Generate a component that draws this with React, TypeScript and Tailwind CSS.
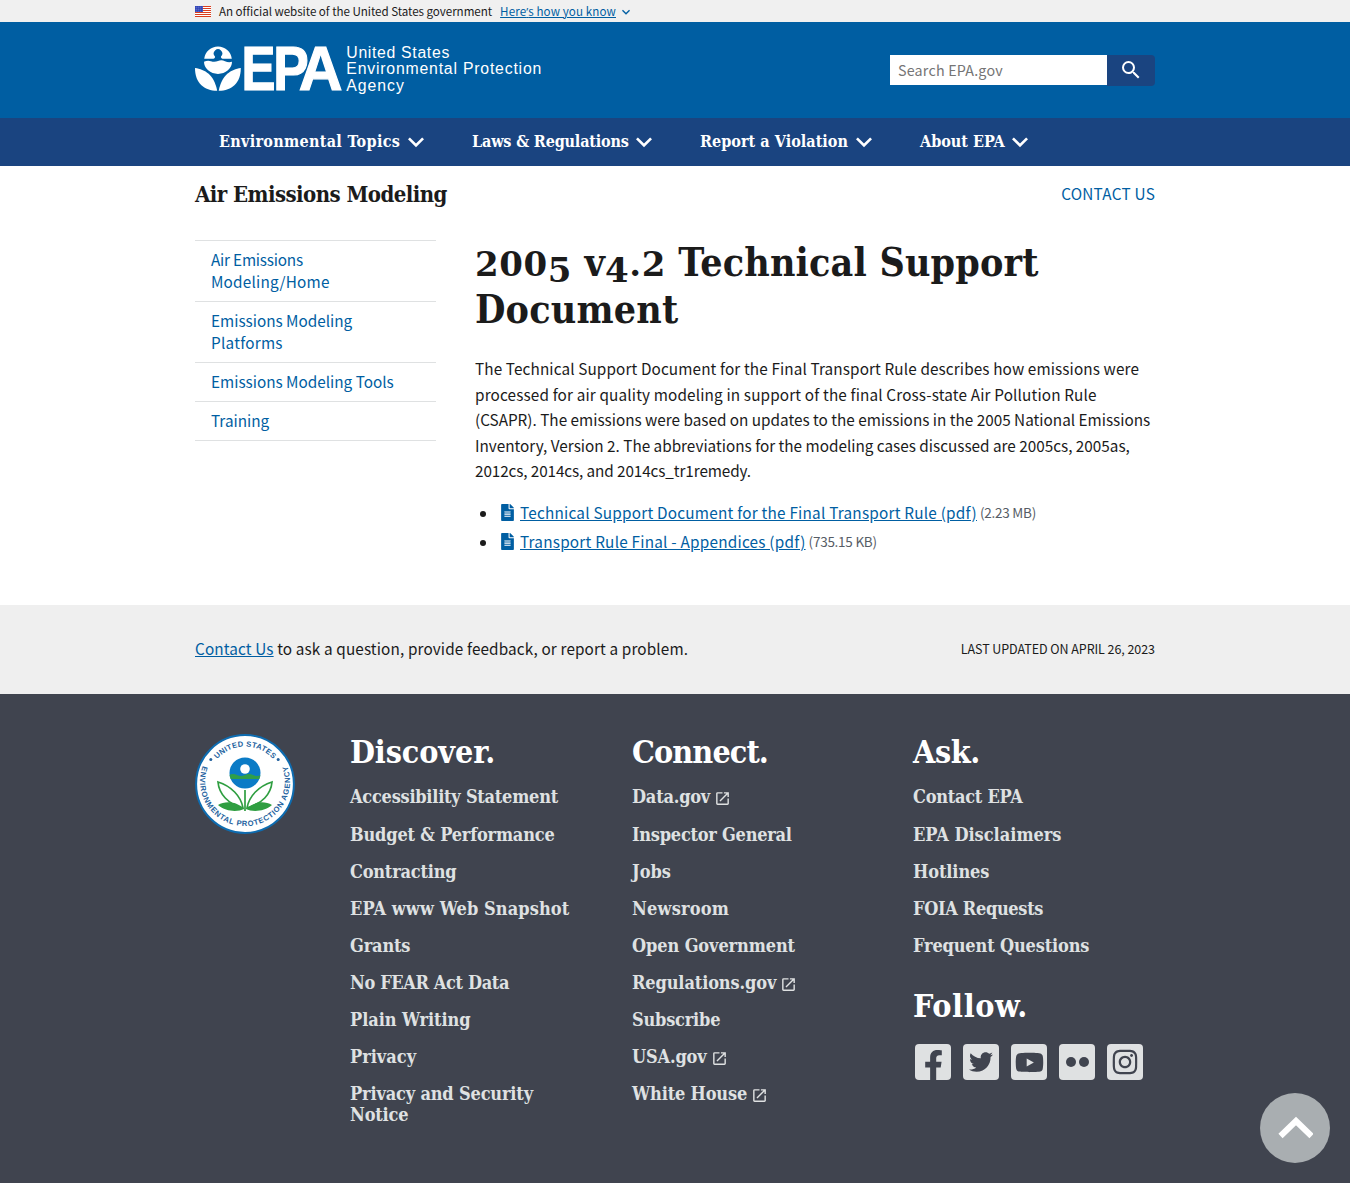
import React from "react";
import { MdExpandMore, MdLaunch, MdSearch } from "react-icons/md";
import { FaFacebookF, FaFileAlt, FaInstagram, FaTwitter, FaYoutube } from "react-icons/fa";

const SERIF = "font-['DejaVu_Serif_Condensed','DejaVu_Serif',serif] font-bold";

function Flag() {
  return (
    <svg width="16" height="11" viewBox="0 0 16 11" className="shrink-0">
      <rect width="16" height="11" fill="#fff" />
      {[0, 2, 4, 6, 8, 10].map((y) => (
        <rect key={y} y={y} width="16" height="1" fill="#db3e1f" />
      ))}
      <rect width="8" height="6" fill="#1e33b1" />
      {[1, 3, 5].map((y) =>
        [1, 3, 5, 7].map((x) => <rect key={`${x}-${y}`} x={x - 0.3} y={y - 0.3} width="0.8" height="0.8" fill="#fff" />)
      )}
    </svg>
  );
}

function Logo() {
  return (
    <svg width="350" height="52" viewBox="0 -1 350 52" fill="#fff" className="block overflow-visible">
      <path d="M9.200 13.800 A13.900 13.900 0 0 1 36.800 13.800 L29 13.800 Q25.600 13.800 26 11.500 A4.200 4.200 0 1 0 20 11.500 Q20.400 13.800 17 13.800 Z" />
      <path d="M9 16.800 Q12.500 15 16 16.200 T23 16 T30 16.200 T37 16.800 A13.900 12 0 0 1 9 16.800 Z" />
      <path d="M0 23 C10 24.500 19 29.500 22.200 45.800 C9 45.800 0 38 0 23 Z" />
      <path d="M45.800 23 C36 24.500 27 29.500 23.700 45.800 C36.800 45.800 45.800 38 45.800 23 Z" />
      <g fontFamily="Liberation Sans" fontWeight="700" fontSize="63" stroke="#fff" strokeWidth="1.200">
        <text x="46.500" y="44.600" textLength="34" lengthAdjust="spacingAndGlyphs">E</text>
        <text x="78.300" y="44.600" textLength="35.500" lengthAdjust="spacingAndGlyphs">P</text>
        <text x="103.800" y="44.600" textLength="43.800" lengthAdjust="spacingAndGlyphs">A</text>
      </g>
      <g fontFamily="Liberation Sans" fontSize="15.800">
        <text x="151.300" y="13.200" textLength="103">United States</text>
        <text x="151.300" y="29.400" textLength="195">Environmental Protection</text>
        <text x="151.300" y="45.800" textLength="57.500">Agency</text>
      </g>
    </svg>
  );
}

function Seal() {
  return (
    <svg width="100" height="100" viewBox="0 0 100 100" className="block">
      <defs>
        <path id="sealTop" d="M12.500 50 A37.500 37.500 0 0 1 87.500 50" />
        <path id="sealBottom" d="M8 31 A45 45 0 1 0 92 31" />
        <clipPath id="sealSun"><circle cx="50" cy="39" r="15.500" /></clipPath>
      </defs>
      <circle cx="50" cy="50" r="48.900" fill="#fff" stroke="#0e6cb0" strokeWidth="2" />
      <g fontFamily="Liberation Sans" fontWeight="700" fontSize="7.600" fill="#23619e">
        <text><textPath href="#sealTop" startOffset="50%" textAnchor="middle" textLength="63">UNITED STATES</textPath></text>
        <text><textPath href="#sealBottom" startOffset="50%" textAnchor="middle" textLength="172">ENVIRONMENTAL PROTECTION AGENCY</textPath></text>
      </g>
      <circle cx="15.800" cy="25.500" r="1.500" fill="#23619e" />
      <circle cx="83.200" cy="25.500" r="1.500" fill="#23619e" />
      <g clipPath="url(#sealSun)">
        <rect x="34" y="23" width="32" height="32" fill="#0b7bc6" />
        <path d="M34 41 Q38 39 42 41 T50 41 T58 41 T66 41 V45 H34 Z" fill="#2f9e4a" />
      </g>
      <circle cx="50" cy="35" r="4.800" fill="#fff" />
      <g fill="none" stroke="#2f9e41" strokeWidth="1.700">
        <path d="M50 56 V77" />
        <path d="M48 74 C46 62 36 52 23 48 C24 60 33 70 48 74 Z" />
        <path d="M52 74 C54 62 64 52 77 48 C76 60 67 70 52 74 Z" />
      </g>
      <path d="M49 75 C41 67 30 67 23 71 C31 78 43 78 49 75 Z M51 75 C59 67 70 67 77 71 C69 78 57 78 51 75 Z" fill="#2f9e41" />
    </svg>
  );
}

const nav = [
  { label: "Environmental Topics", cls: "w-[253px] tracking-[0.3px]" },
  { label: "Laws & Regulations", cls: "w-[228px] tracking-[-0.16px]" },
  { label: "Report a Violation", cls: "w-[220px] tracking-[0.04px]" },
  { label: "About EPA", cls: "w-[160px]" },
];

type FooterLink = { label: string; cls?: string; external?: boolean };

const discover: FooterLink[] = [
  { label: "Accessibility Statement", cls: "tracking-[-0.24px]" },
  { label: "Budget & Performance", cls: "tracking-[-0.18px]" },
  { label: "Contracting", cls: "tracking-[-0.2px]" },
  { label: "EPA www Web Snapshot", cls: "tracking-[0.1px]" },
  { label: "Grants", cls: "tracking-[-0.15px]" },
  { label: "No FEAR Act Data", cls: "tracking-[-0.36px]" },
  { label: "Plain Writing", cls: "tracking-[-0.05px]" },
  { label: "Privacy" },
  { label: "Privacy and Security Notice", cls: "tracking-[-0.16px]" },
];
const connect: FooterLink[] = [
  { label: "Data.gov", cls: "tracking-[-0.2px]", external: true },
  { label: "Inspector General", cls: "tracking-[-0.24px]" },
  { label: "Jobs" },
  { label: "Newsroom", cls: "tracking-[0.2px]" },
  { label: "Open Government", cls: "tracking-[-0.1px]" },
  { label: "Regulations.gov", cls: "tracking-[-0.12px]", external: true },
  { label: "Subscribe", cls: "tracking-[-0.2px]" },
  { label: "USA.gov", cls: "tracking-[-0.15px]", external: true },
  { label: "White House", cls: "tracking-[-0.16px]", external: true },
];
const ask: FooterLink[] = [
  { label: "Contact EPA", cls: "tracking-[-0.25px]" },
  { label: "EPA Disclaimers" },
  { label: "Hotlines", cls: "tracking-[-0.1px]" },
  { label: "FOIA Requests", cls: "tracking-[-0.32px]" },
  { label: "Frequent Questions", cls: "tracking-[-0.15px]" },
];

function FooterColumn({ title, titleCls, links, width }: { title: string; titleCls: string; links: FooterLink[]; width: string }) {
  return (
    <section className={width}>
      <h2 className={`${SERIF} ${titleCls} text-[32px] leading-[38px] text-white`}>{title}</h2>
      <ul className="mt-[15px] flex flex-col gap-4">
        {links.map((l) => (
          <li key={l.label} className={`${SERIF} ${l.cls ?? ""} w-[230px] text-[18px] leading-[21px] text-[#dfe1e2] first:mb-[1px]`}>
            <a href="#">{l.label}</a>
            {l.external && <MdLaunch className="ml-[4px] inline-block size-[17px] align-[-4px]" />}
          </li>
        ))}
      </ul>
    </section>
  );
}

function SocialTile({ children }: { children: React.ReactNode }) {
  return <a href="#" className="flex size-9 items-center justify-center overflow-hidden rounded-[4px] bg-[#dfe1e2] text-[#40444f]">{children}</a>;
}

/* Old-style figures: x-height-like digits, with 4 and 5 dropping below the baseline. */
function Figures({ children }: { children: string }) {
  return (
    <span className="font-['DejaVu_Serif',serif] text-[34px] leading-none tracking-[0.6px]">
      {children.split("").map((c, i) => (
        <span key={i} className={c === "4" || c === "5" ? "relative top-[6px]" : ""}>{c}</span>
      ))}
    </span>
  );
}

export default function App() {
  return (
    <div className="relative min-h-[1183px] w-[1350px] bg-white font-['Noto_Sans_CJK_SC',sans-serif] text-[15.3px] text-[#1b1b1b]">
      <div className="h-[22px] bg-[#f0f0f0]">
        <div className="mx-auto flex h-full w-[960px] items-center text-[11.6px] leading-[22px]">
          <Flag />
          <span className="ml-2 tracking-[-0.04px]">An official website of the United States government</span>
          <a href="#" className="ml-2 tracking-[0.1px] text-[#005ea2] underline">Here<span className="font-['Open_Sans',sans-serif]">’</span>s how you know</a>
          <MdExpandMore className="ml-[2px] mt-[1px] size-4 text-[#005ea2]" />
        </div>
      </div>

      <header className="h-24 bg-[#005ea2]">
        <div className="mx-auto flex h-full w-[960px] items-center justify-between">
          <Logo />
          <div className="flex h-[31px] w-[265px]">
            <input className="h-[30px] w-[217px] bg-white px-2 pb-[1px] text-[14.3px] tracking-[0.2px] text-[#1b1b1b] placeholder:text-[#757575]" placeholder="Search EPA.gov" />
            <button className="flex flex-1 items-center justify-center rounded-r-[4px] bg-[#1a4480] text-white">
              <MdSearch className="size-6" />
            </button>
          </div>
        </div>
      </header>

      <nav className="h-12 bg-[#1a4480]">
        <ul className="mx-auto flex h-full w-[960px] items-center pl-6">
          {nav.map((n) => (
            <li key={n.label} className={`${SERIF} ${n.cls} flex items-center whitespace-nowrap text-[16px] text-white`}>
              {n.label}
              <MdExpandMore className="-ml-[0.5px] size-8 shrink-0" />
            </li>
          ))}
        </ul>
      </nav>

      <div className="mx-auto w-[960px]">
        <div className="flex h-[74px] items-start justify-between pt-[14px]">
          <h2 className={`${SERIF} text-[22px] leading-[29px] tracking-[-0.55px]`}>Air Emissions Modeling</h2>
          <a href="#" className="leading-[27px] tracking-[0.25px] text-[#005ea2]">CONTACT US</a>
        </div>
        <div className="flex h-[365px]">
          <aside className="w-[241px]">
            <ul className="border-b border-[#dfe1e2] leading-[22px] text-[#005ea2]">
              <li className="border-t border-[#dfe1e2] px-4 pb-[9px] pt-[7px]"><span className="tracking-[-0.2px]">Air Emissions</span><br /><span className="tracking-[0.2px]">Modeling/Home</span></li>
              <li className="border-t border-[#dfe1e2] px-4 pb-[9px] pt-[7px]">Emissions Modeling<br /><span className="tracking-[0.25px]">Platforms</span></li>
              <li className="border-t border-[#dfe1e2] px-4 pb-[9px] pt-[7px]">Emissions Modeling Tools</li>
              <li className="border-t border-[#dfe1e2] px-4 pb-[9px] pt-[7px]">Training</li>
            </ul>
          </aside>
          <main className="ml-[39px] w-[680px] whitespace-nowrap">
            <h1 className={`${SERIF} -mt-[1px] text-[39px] leading-[47px] tracking-[0.17px]`}>
              <Figures>2005</Figures> v<Figures>4.2</Figures> Technical Support<br />Document
            </h1>
            <p className="mt-[23px] leading-[25.5px]">
              <span className="tracking-[0.12px]">The Technical Support Document for the Final Transport Rule describes how emissions were</span><br />
              <span className="tracking-[0.15px]">processed for air quality modeling in support of the final Cross-state Air Pollution Rule</span><br />
              (CSAPR). The emissions were based on updates to the emissions in the 2005 National Emissions<br />
              Inventory, Version 2. The abbreviations for the modeling cases discussed are 2005cs, 2005as,<br />
              <span className="tracking-[-0.1px]">2012cs, 2014cs, and 2014cs_tr1remedy.</span>
            </p>
            <ul className="mt-4 flex flex-col gap-1 leading-[25px]">
              {[
                ["Technical Support Document for the Final Transport Rule (pdf)", "(2.23 MB)"],
                ["Transport Rule Final - Appendices (pdf)", "(735.15 KB)"],
              ].map(([name, size]) => (
                <li key={name} className="flex items-center">
                  <span className="ml-[5px] mt-[3px] size-[6px] rounded-full bg-[#1b1b1b]" />
                  <FaFileAlt className="ml-[15px] h-[17px] w-[13px] text-[#005ea2]" />
                  <a href="#" className="ml-[6px] tracking-[0.23px] text-[#005ea2] underline">{name}</a>
                  <span className="ml-[3px] text-[13.5px] tracking-[-0.25px] text-[#565c65]">{size}</span>
                </li>
              ))}
            </ul>
          </main>
        </div>
      </div>

      <div className="h-[89px] bg-[#efefef]">
        <div className="mx-auto flex h-full w-[960px] items-center justify-between">
          <p className="mb-[2px] tracking-[0.13px]"><a href="#" className="text-[#005ea2] underline">Contact Us</a> to ask a question, provide feedback, or report a problem.</p>
          <p className="text-[12.5px] tracking-[-0.06px]">LAST UPDATED ON APRIL 26, 2023</p>
        </div>
      </div>

      <footer className="h-[489px] bg-[#40444f]">
        <div className="mx-auto flex w-[960px] pt-[39px]">
          <div className="mt-[1px] w-[155px]"><Seal /></div>
          <FooterColumn title="Discover." titleCls="tracking-[-0.1px]" links={discover} width="w-[282px]" />
          <FooterColumn title="Connect." titleCls="tracking-[-0.9px]" links={connect} width="w-[281px]" />
          <div className="w-[242px]">
            <FooterColumn title="Ask." titleCls="tracking-[-0.4px]" links={ask} width="w-full" />
            <h2 className={`${SERIF} mt-[31px] text-[32px] leading-[38px] tracking-[0.6px] text-white`}>Follow.</h2>
            <div className="ml-[2px] mt-[19px] flex gap-3">
              <SocialTile><FaFacebookF className="ml-[1px] mt-[6px] size-[31px]" /></SocialTile>
              <SocialTile><FaTwitter className="size-6" /></SocialTile>
              <SocialTile><FaYoutube className="size-[29px]" /></SocialTile>
              <SocialTile>
                <span className="flex gap-[3px]"><i className="size-[10px] rounded-full bg-[#40444f]" /><i className="size-[10px] rounded-full bg-[#40444f]" /></span>
              </SocialTile>
              <SocialTile><FaInstagram className="size-[28px]" /></SocialTile>
            </div>
          </div>
        </div>
      </footer>

      <button className="absolute bottom-5 right-5 flex size-[70px] items-center justify-center rounded-full bg-[#a9aeb1]">
        <svg width="36" height="24" viewBox="0 0 36 24" fill="none" stroke="#fff" strokeWidth="6"><path d="M3.500 20 L19 5 L34.500 20" /></svg>
      </button>
    </div>
  );
}
